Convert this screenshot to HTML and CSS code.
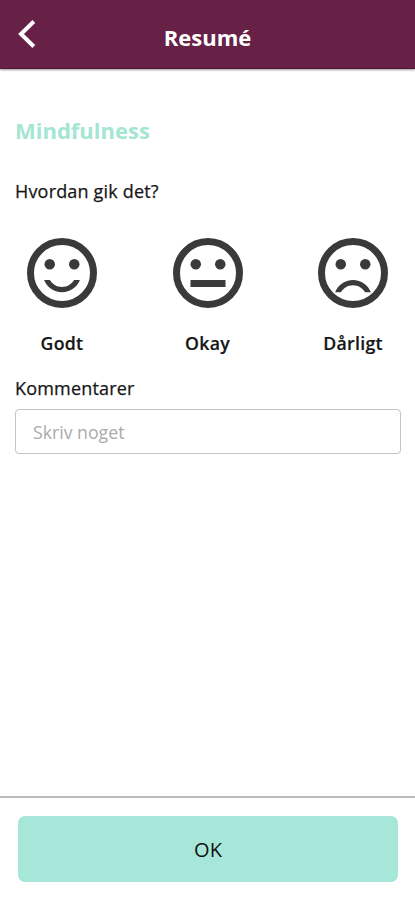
FILE: index.html
```html
<!DOCTYPE html>
<html lang="da">
<head>
<meta charset="utf-8">
<title>Resumé</title>
<link rel="stylesheet" href="styles.css">
</head>
<body>
<header class="header">
  <svg class="back" viewBox="0 0 20 32"><path d="M16.800 3.500 4 16l12.800 12.500"/></svg>
  <h1 class="header-title">Resumé</h1>
</header>
<main class="content">
  <h2 class="activity">Mindfulness</h2>
  <p class="label question">Hvordan gik det?</p>
  <div class="moods">
    <div class="mood">
      <svg class="face" viewBox="0 0 24 24"><circle class="ring" cx="12" cy="12" r="9"/><circle cx="8.500" cy="9.500" r="1.500"/><circle cx="15.500" cy="9.500" r="1.500"/><path d="M12 16c-1.480 0-2.750-.81-3.450-2H6.880c.8 2.050 2.790 3.500 5.120 3.500s4.320-1.450 5.120-3.500h-1.670c-.7 1.190-1.970 2-3.450 2z"/></svg>
      <span class="mood-name">Godt</span>
    </div>
    <div class="mood">
      <svg class="face" viewBox="0 0 24 24"><circle class="ring" cx="12" cy="12" r="9"/><circle cx="8.500" cy="9.500" r="1.500"/><circle cx="15.500" cy="9.500" r="1.500"/><path d="M7 14h10v2H7z"/></svg>
      <span class="mood-name">Okay</span>
    </div>
    <div class="mood">
      <svg class="face" viewBox="0 0 24 24"><circle class="ring" cx="12" cy="12" r="9"/><circle cx="8.500" cy="9.500" r="1.500"/><circle cx="15.500" cy="9.500" r="1.500"/><path d="M12 14c-2.330 0-4.320 1.450-5.120 3.500h1.670c.69-1.190 1.970-2 3.450-2s2.750.81 3.450 2h1.670c-.8-2.050-2.790-3.500-5.120-3.500z"/></svg>
      <span class="mood-name">Dårligt</span>
    </div>
  </div>
  <p class="label comments">Kommentarer</p>
  <input class="field" type="text" placeholder="Skriv noget">
</main>
<footer class="footer">
  <button class="ok" type="button">OK</button>
</footer>
</body>
</html>
```
FILE: styles.css
```css
* { box-sizing: border-box; }
body {
  margin: 0;
  height: 900px;
  display: flex;
  flex-direction: column;
  overflow: hidden;
  background: #fff;
  color: #161616;
  font-family: "Open Sans", "Noto Sans", sans-serif;
}
.header {
  height: 69px;
  display: grid;
  grid-template-columns: 20px 1fr 20px;
  align-items: center;
  padding: 0 17px;
  background: #672146;
  border-bottom: 1px solid #561637;
  box-shadow: 0 1px 2px rgba(0, 0, 0, .4);
}
.back {
  width: 20px;
  height: 32px;
  fill: none;
  stroke: #fff;
  stroke-width: 4;
}
.header-title {
  margin: 6px 0 0;
  text-align: center;
  color: #fff;
  font-size: 22px;
  line-height: 30px;
  font-weight: 700;
}
.content {
  flex: 1;
  padding: 45px 14px 0 15px;
}
.activity {
  margin: 0;
  color: #a5e5d3;
  font-size: 22px;
  line-height: 32px;
  font-weight: 700;
}
.label {
  margin: 0;
  font-size: 18px;
  line-height: 24px;
  font-weight: 400;
  letter-spacing: .18px;
  -webkit-text-stroke: .25px #161616;
}
.question { margin-top: 33px; }
.moods {
  display: flex;
  justify-content: space-between;
  padding: 0 6px 0 5px;
  margin-top: 28px;
}
.mood {
  width: 84px;
  display: flex;
  flex-direction: column;
  align-items: center;
}
.face {
  width: 84px;
  height: 84px;
  fill: #3a3a3b;
}
.ring {
  fill: none;
  stroke: #3a3a3b;
  stroke-width: 2;
}
.mood-name {
  margin-top: 16px;
  font-size: 17.700px;
  line-height: 24px;
  font-weight: 600;
  letter-spacing: .3px;
  -webkit-text-stroke: .2px #161616;
}
.comments { margin-top: 21px; }
.field {
  display: block;
  width: 100%;
  height: 45px;
  margin-top: 9px;
  padding: 0 17px;
  border: 1px solid #c4c4c4;
  border-radius: 4px;
  background: #fff;
  font: 400 17.700px/24px "Open Sans", "Noto Sans", sans-serif;
}
.field::placeholder { color: #aaa; opacity: 1; }
.footer {
  height: 104px;
  padding: 18px 17px 0 18px;
  border-top: 2px solid #bcbcbc;
}
.ok {
  display: block;
  width: 100%;
  height: 66px;
  padding: 2px 0 0;
  border: 0;
  border-radius: 7px;
  background: #a6e7da;
  color: #111;
  font: 400 20px/28px "Open Sans", "Noto Sans", sans-serif;
}
```
